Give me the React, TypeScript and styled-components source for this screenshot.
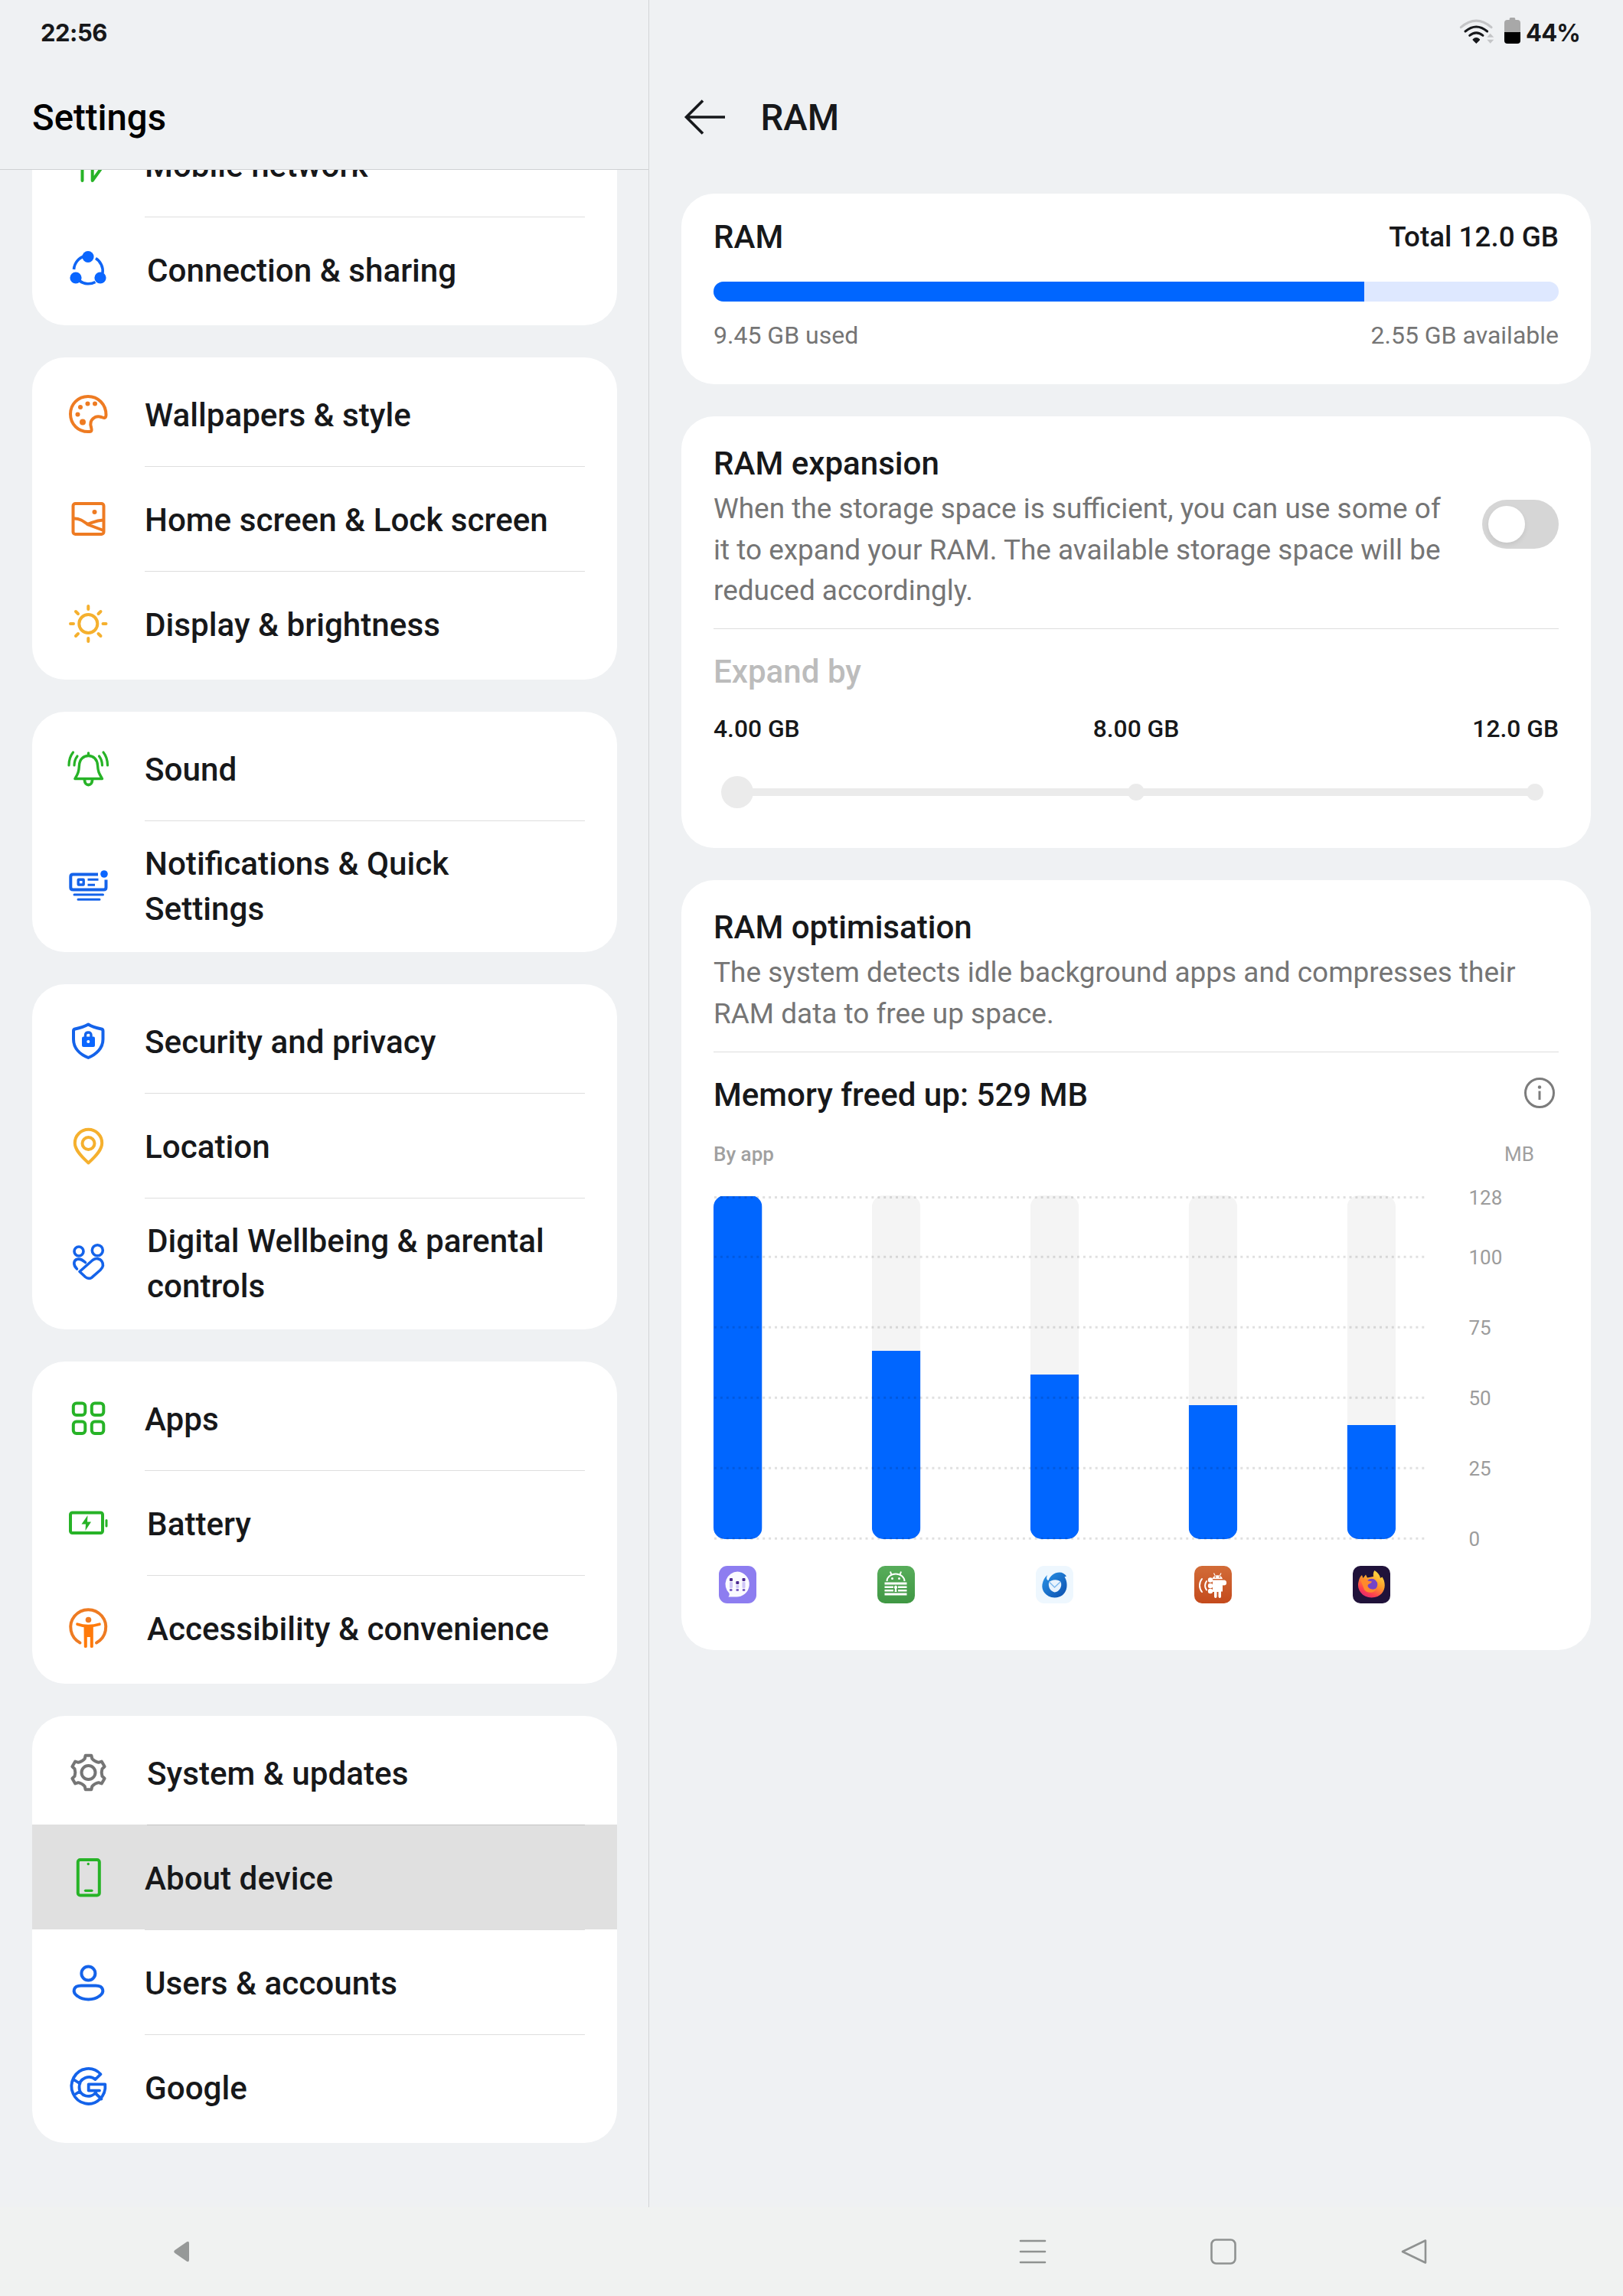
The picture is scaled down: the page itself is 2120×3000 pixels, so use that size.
import type { ReactNode } from 'react'
import styled, { createGlobalStyle } from 'styled-components'

const BLUE = '#1463ea'
const GREEN = '#27b327'
const ORANGE = '#ee7b22'
const YELLOW = '#f5b02e'

type Item = {
  label: string
  icon: ReactNode
  indent?: number
  active?: boolean
}

const stroke = (color: string, width = 4) => ({
  fill: 'none',
  stroke: color,
  strokeWidth: width,
  strokeLinecap: 'round' as const,
  strokeLinejoin: 'round' as const,
})

/* six rounded teeth around the hub */
const gearPath = () => {
  const at = (deg: number, r: number) => {
    const a = (deg * Math.PI) / 180
    return `${(28.5 + r * Math.cos(a)).toFixed(2)} ${(28 + r * Math.sin(a)).toFixed(2)}`
  }
  let d = ''
  for (let k = 0; k < 6; k++) {
    const t = -90 + k * 60
    d += `${k === 0 ? 'M' : 'L'}${at(t - 10, 22.5)} L${at(t + 10, 22.5)} L${at(t + 15, 18.6)} `
    d += `Q${at(t + 30, 16.4)} ${at(t + 45, 18.6)} `
  }
  return d + 'Z'
}

const groups: Item[][] = [
  [
    {
      label: 'Mobile network',
      icon: <path {...stroke(GREEN)} d="M10 20L20.5 6V49M33.7 6V49L46 32" />,
    },
    {
      label: 'Connection & sharing',
      indent: 192,
      icon: (
        <>
          <g fill="#0a66ff">
            <circle cx="28" cy="11.5" r="7.6" />
            <circle cx="12" cy="39" r="7.6" />
            <circle cx="44" cy="39" r="7.6" />
          </g>
          <path {...stroke('#0f65f5', 3.6)} strokeLinecap="butt" d="M24 10.5A19.5 19.5 0 0 0 9.5 28M38 13.5A19.5 19.5 0 0 1 47 33M17 43A19 19 0 0 0 37.5 44.5" />
        </>
      ),
    },
  ],
  [
    {
      label: 'Wallpapers & style',
      icon: (
        <>
          <path {...stroke(ORANGE)} d="M30 51C15 52 5 41 5 28C5 15 15 5 28 5C41 5 51.5 15 51.5 29C51.5 33.5 49 33.5 45.5 32C37 29 29 36 32 45C33 49 33 50.8 30 51Z" />
          <g fill={ORANGE}>
            <circle cx="27.5" cy="14.5" r="3" />
            <circle cx="37" cy="14.5" r="3" />
            <circle cx="18" cy="19" r="3" />
            <circle cx="14.5" cy="28.5" r="3" />
            <circle cx="21" cy="38.5" r="4" />
          </g>
        </>
      ),
    },
    {
      label: 'Home screen & Lock screen',
      icon: (
        <>
          <rect {...stroke(ORANGE)} x="8.5" y="8" width="40" height="40" rx="3" />
          <path {...stroke(ORANGE)} d="M9 27.5C17 27 22 31 28 35.5L48 43M48 29.5C38 30 34 33 27 35" />
          <circle cx="36.5" cy="19" r="3" fill={ORANGE} />
        </>
      ),
    },
    {
      label: 'Display & brightness',
      icon: (
        <>
          <circle {...stroke(YELLOW)} cx="28.3" cy="28" r="12" />
          <path {...stroke(YELLOW)} d="M28.3 5V9M28.3 47V51M5 28H9M47.5 28H51.5M12 12L15 15M41.5 41L44.5 44M44.5 12L41.5 15M15 41L12 44" />
        </>
      ),
    },
  ],
  [
    {
      label: 'Sound',
      icon: (
        <>
          <path {...stroke(GREEN, 3.4)} d="M28.5 8V11M11 41.5H46.5C42 34 41 32 40.5 24C40 16 35 11.5 28.5 11.5C22 11.5 17 16 16.5 24C16 32 15 35 11 41.5Z" />
          <path {...stroke(GREEN, 3.8)} d="M23.5 43.5C24 51.5 33 51.5 33.5 43.5" />
          <path {...stroke(GREEN, 3.2)} d="M8.5 7C4.5 12 3 18 3 24M14 12C11 16 10 20 10 24M48 7C52 12 53.5 18 53.5 24M42.5 12C45.5 16 46.5 20 46.5 24" />
        </>
      ),
    },
    {
      label: 'Notifications & Quick\nSettings',
      icon: (
        <>
          <path {...stroke(BLUE)} strokeLinecap="butt" d="M41 14.5H8.5Q5.3 14.5 5.3 17.5V31.5Q5.3 34.5 8.5 34.5H48.5Q51.5 34.5 51.5 31.5V21.5" />
          <circle cx="49" cy="14" r="4.8" fill="#0a66ff" />
          <rect {...stroke(BLUE, 3.4)} x="15.2" y="21.2" width="7" height="6.8" rx="0.5" />
          <path {...stroke(BLUE, 3)} strokeLinecap="butt" d="M27.5 21.2H41.5M27.5 28.2H37" />
          <path {...stroke(BLUE, 3)} d="M10 41H47.5M15 47.3H43" />
        </>
      ),
    },
  ],
  [
    {
      label: 'Security and privacy',
      icon: (
        <>
          <path {...stroke(BLUE)} d="M28.3 6.5C33 9.5 38 11 45.5 12.5Q47.5 13 47.5 15V26C47.5 38 38 46 28.3 50C18 46 9 38 9 26V15Q9 13 11 12.5C18 11 23 9.5 28.3 6.5Z" />
          <rect x="20" y="22.5" width="17" height="13.5" rx="2" fill="#0a66ff" />
          <path {...stroke(BLUE, 3.4)} d="M24.5 23V20.5Q24.5 17 28.3 17T32 20.5V23" />
          <circle cx="28.3" cy="29" r="2" fill="#fff" />
        </>
      ),
    },
    {
      label: 'Location',
      icon: (
        <>
          <path {...stroke(YELLOW)} d="M28.5 50.5C18 41 10.8 33 10.8 24.5A17.7 17.7 0 0 1 46.2 24.5C46.2 33 39 41 28.5 50.5Z" />
          <circle {...stroke(YELLOW)} cx="28.5" cy="25" r="8" />
        </>
      ),
    },
    {
      label: 'Digital Wellbeing & parental\ncontrols',
      indent: 192,
      icon: (
        <>
          <circle {...stroke(BLUE, 3.6)} cx="16" cy="14" r="6" />
          <circle {...stroke(BLUE, 3.6)} cx="40.3" cy="12.8" r="7" />
          <path {...stroke(BLUE, 3.6)} d="M13.5 37C8 32 9 25.5 14 24.3C18.5 23.5 21 25.5 24.5 28.5" />
          <path {...stroke(BLUE, 3.6)} d="M17 40.5L34 25.5C38 22.5 43 23 46 27C49 31.5 47 35.5 44 38.5L33 48.2Q28.5 51 24.5 47.5Z" />
        </>
      ),
    },
  ],
  [
    {
      label: 'Apps',
      icon: (
        <g {...stroke(GREEN)}>
          <rect x="8.8" y="8.5" width="15.5" height="15.5" rx="4" />
          <rect x="32.8" y="8.5" width="15.5" height="15.5" rx="4" />
          <rect x="8.8" y="32.5" width="15.5" height="15.5" rx="4" />
          <rect x="32.8" y="32.5" width="15.5" height="15.5" rx="4" />
        </g>
      ),
    },
    {
      label: 'Battery',
      indent: 192,
      icon: (
        <>
          <rect {...stroke(GREEN)} x="5" y="14.5" width="42" height="26.5" rx="2.5" />
          <path {...stroke(GREEN, 3)} d="M52 24.5V32" />
          <path fill={GREEN} d="M27.5 18L19.5 29.5H25L24.5 38L32 26.5H27Z" />
        </>
      ),
    },
    {
      label: 'Accessibility & convenience',
      indent: 192,
      icon: (
        <>
          <path {...stroke(ORANGE)} d="M17.5 47.5A23 23 0 1 1 39 47.5" />
          <circle cx="28.5" cy="17.5" r="3.8" fill={ORANGE} />
          <path {...stroke('#ff7a0a', 3.6)} d="M14 23.2Q28 28 43 23.2" />
          <path fill="#ff7a0a" d="M22.5 25.5H34.8V52.5Q34.8 54 32.8 54T30.8 52.5V40H26.8V52.5Q26.8 54 24.8 54T22.8 52.5Z" />
        </>
      ),
    },
  ],
  [
    {
      label: 'System & updates',
      indent: 192,
      icon: (
        <>
          <path {...stroke('#757575')} d={gearPath()} />
          <circle {...stroke('#757575')} cx="28.5" cy="28" r="9" />
        </>
      ),
    },
    {
      label: 'About device',
      active: true,
      icon: (
        <>
          <rect {...stroke(GREEN)} x="14.8" y="5" width="28" height="46.5" rx="3" />
          <circle cx="28.3" cy="10.5" r="1.7" fill={GREEN} />
          <path {...stroke(GREEN, 3.2)} d="M24.5 45.3H33" />
        </>
      ),
    },
    {
      label: 'Users & accounts',
      icon: (
        <>
          <circle {...stroke(BLUE)} cx="28.4" cy="16.5" r="9" />
          <path {...stroke(BLUE)} d="M19 32.5H38C48.5 32.5 50 41 43 46C35 52 22 52 14 46C7 41 8.5 32.5 19 32.5Z" />
        </>
      ),
    },
    {
      label: 'Google',
      icon: (
        <path
          {...stroke(BLUE, 3.8)}
          d="M37.5 18L44.5 11.2A22 23 0 1 0 50.3 24.3H28.7V32.6H43M38.5 34.5C32 43.5 16.500 41 16.5 28C16.5 16 30 11.5 37.5 18M9 18L17.5 23.5M9.5 38.5L17.5 33.5M38.5 37L45.5 43.5"
        />
      ),
    },
  ],
]

const CHART_TOP = 12
const CHART_BOTTOM = 461
const BAR_STEP = 206.9
const gridLines = [
  { label: '128', y: 14.5 },
  { label: '100', y: 92.3 },
  { label: '75', y: 184.3 },
  { label: '50', y: 276.3 },
  { label: '25', y: 368.3 },
  { label: '0', y: 460.3 },
]
const bars = [448, 246, 215, 175, 149]

function MessagesIcon() {
  return (
    <svg width="49" height="49" viewBox="0 0 49 49">
      <rect width="49" height="49" rx="11" fill="#8d7df0" />
      <path fill="#fbfaff" d="M24.5 7.5A16.5 16.5 0 1 1 22 40.5H12.5Q14.5 38 13.5 35.8A16.5 16.5 0 0 1 24.5 7.5Z" />
      <g fill="#4d2a92">
        <rect x="14" y="16" width="4" height="4" rx="1" />
        <rect x="30.5" y="16" width="4" height="4" rx="1" />
        <rect x="22.3" y="20" width="4" height="4" rx="1" />
      </g>
      <g fill="#7c62c4">
        <rect x="14" y="30" width="3.5" height="3" rx="1" />
        <rect x="22.5" y="30" width="3.5" height="3" rx="1" />
        <rect x="30.8" y="30" width="3.5" height="3" rx="1" />
      </g>
      <g fill="#cfc6f8">
        <rect x="14" y="21" width="4" height="8" rx="1" />
        <rect x="22.3" y="25" width="4" height="4" rx="1" />
        <rect x="30.5" y="21" width="4" height="8" rx="1" />
      </g>
    </svg>
  )
}

function KeyPassIcon() {
  return (
    <svg width="49" height="49" viewBox="0 0 49 49">
      <defs>
        <linearGradient id="kp" x1="0" y1="0" x2="0" y2="1">
          <stop offset="0" stopColor="#58ad5b" />
          <stop offset="1" stopColor="#3f9743" />
        </linearGradient>
      </defs>
      <rect width="49" height="49" rx="10" fill="url(#kp)" />
      <path fill="none" stroke="#fff" strokeWidth="2" d="M12.5 20A11.5 9.5 0 0 1 35.5 20M17 7.5L18.5 12M31 7.5L29.5 12" />
      <circle cx="19.5" cy="16.5" r="1.5" fill="#fff" />
      <circle cx="28.5" cy="16.5" r="1.5" fill="#fff" />
      <path fill="#fff" d="M9.5 21.5H38.5V24.5H9.5ZM9.5 26.5H21V29H9.5ZM27 26.5H38.5V29H27ZM9.5 31H21V33.5H9.5ZM27 31H38.5V33.5H27ZM9.5 35.5H38.5V38.5H9.5ZM24 25.5A2.5 2.5 0 0 1 25 30L25.5 34H22.5L23 30A2.5 2.5 0 0 1 24 25.5Z" />
    </svg>
  )
}

function ThunderbirdIcon() {
  return (
    <svg width="49" height="49" viewBox="0 0 49 49">
      <defs>
        <linearGradient id="tb" x1="0" y1="0" x2="1" y2="1">
          <stop offset="0" stopColor="#2b95e8" />
          <stop offset="1" stopColor="#0c4fae" />
        </linearGradient>
      </defs>
      <rect width="49" height="49" rx="11" fill="#eef7fe" />
      <path fill="url(#tb)" d="M15 12C13 17 15 19 16.5 19C19 13 24 8.5 31 8.5C35 8.5 38 10.5 40 13.5L37.5 14.5C43 22 42.5 41 24.5 41.5C13 41 7 32 8.5 24C9.5 19 11.5 15 15 12Z" />
      <path fill="#e9f3fd" d="M17 22C20 17.5 29 17 32.5 21C35 26 31 34 24.5 34.5C19 33 16 28 17 22Z" />
      <path fill="none" stroke="#7fb9ee" strokeWidth="1.5" d="M18 21.5L24.5 28L32 21" />
    </svg>
  )
}

function DroidSoundIcon() {
  return (
    <svg width="49" height="49" viewBox="0 0 49 49">
      <defs>
        <linearGradient id="ds" x1="0" y1="0" x2="0" y2="1">
          <stop offset="0" stopColor="#d26c38" />
          <stop offset="1" stopColor="#c44a1c" />
        </linearGradient>
      </defs>
      <rect width="49" height="49" rx="10" fill="url(#ds)" />
      <path fill="none" stroke="#fff" strokeWidth="2" strokeLinecap="round" d="M10 17C6 22 6 29 10 34M16 20C13.5 24 13.5 28 16 31.5" />
      <g fill="#fff">
        <path d="M23.5 17A7 6.5 0 0 1 37 17ZM24 18.5H37V33.5H35V40Q35 42 33.3 42T31.5 40V34H29.5V40Q29.5 42 27.8 42T26 40V34H24Z" />
        <circle cx="21" cy="18.5" r="3.2" />
        <circle cx="21" cy="26" r="3.2" />
        <circle cx="21" cy="33" r="3.2" />
        <circle cx="38.5" cy="22" r="3.6" />
      </g>
      <path stroke="#fff" strokeWidth="1.2" d="M25.5 9.5L27 12.5M35 9.5L33.5 12.5" />
      <circle cx="27.5" cy="14.5" r="0.9" fill="#cf6531" />
      <circle cx="33" cy="14.5" r="0.9" fill="#cf6531" />
    </svg>
  )
}

function FirefoxIcon() {
  return (
    <svg width="49" height="49" viewBox="0 0 49 49">
      <defs>
        <linearGradient id="ff" x1="0.85" y1="0.05" x2="0.3" y2="1">
          <stop offset="0" stopColor="#ffe046" />
          <stop offset="0.45" stopColor="#ff9a2a" />
          <stop offset="0.8" stopColor="#ff4050" />
          <stop offset="1" stopColor="#e0286e" />
        </linearGradient>
      </defs>
      <rect width="49" height="49" rx="10" fill="#20123a" />
      <path fill="url(#ff)" d="M28.5 6C33 9 35.5 12 36 16L38.5 14.5C45 24 42.5 41 24.5 41.5C11 41 5 30 7.5 21C8.3 17 9.5 14 12 12L13.5 16L17 11.5L19 15.5L27 14C26.5 11 27 8 28.5 6Z" />
      <circle cx="24.5" cy="24.5" r="7.8" fill="#7443c8" />
      <path fill="#ff8a2c" d="M10 18C14 16 18 17 20 19.5L25 20.5C24 23.5 20 23 19.5 26C20 30 27 32.5 31 29C30 35 20 37.5 15 31Z" />
    </svg>
  )
}

function SettingsRow({ item }: { item: Item }) {
  return (
    <Row $active={item.active}>
      <RowIcon viewBox="0 0 56 56">{item.icon}</RowIcon>
      <RowLabel $indent={item.indent}>{item.label}</RowLabel>
    </Row>
  )
}

function Sidebar() {
  return (
    <SidebarColumn>
      <SidebarHeader>
        <Clock>22:56</Clock>
        <Title>Settings</Title>
      </SidebarHeader>
      <SidebarList>
        {groups.map((items, g) => (
          <Group key={g}>
            {items.map((item, i) => (
              <div key={item.label}>
                {i > 0 && <RowDivider $indent={items[i - 1].indent} />}
                <SettingsRow item={item} />
              </div>
            ))}
          </Group>
        ))}
      </SidebarList>
    </SidebarColumn>
  )
}

function StatusIcons() {
  return (
    <StatusBar>
      <svg width="47" height="36" viewBox="80 37 141 108">
        <g fill="none" strokeLinecap="round" strokeWidth="9">
          <path stroke="#c4c5c7" d="M87 78Q147 27 206 78" />
          <path stroke="#16181b" d="M104 94Q147 58 190 94" />
          <path stroke="#16181b" d="M121 110Q147 89 173 110" />
        </g>
        <path fill="#16181b" d="M133 125Q147 111 161 125Q162 127 160 129L147 142L134 129Q132 127 133 125Z" />
        <path fill="#c4c5c7" d="M202 102L216 117H189ZM189 126H216L202 141Z" />
      </svg>
      <svg width="21" height="34" viewBox="258 39 63 102">
        <rect x="278" y="39" width="23" height="14" rx="5" fill="#a8a8a8" />
        <path fill="#a8a8a8" d="M258 96V60Q258 48 270 48H309Q321 48 321 60V96Z" />
        <path fill="#000" d="M258 96H321V129Q321 141 309 141H270Q258 141 258 129Z" />
      </svg>
      <BatteryText>44%</BatteryText>
    </StatusBar>
  )
}

function UsageCard() {
  return (
    <UsagePanel>
      <SpaceBetween>
        <CardTitle>RAM</CardTitle>
        <Total>Total 12.0 GB</Total>
      </SpaceBetween>
      <UsageTrack>
        <UsageFill />
      </UsageTrack>
      <Caption>
        <span>9.45 GB used</span>
        <span>2.55 GB available</span>
      </Caption>
    </UsagePanel>
  )
}

function ExpansionCard() {
  return (
    <ExpansionPanel>
      <SwitchRow>
        <div>
          <CardHeading>RAM expansion</CardHeading>
          <Description>
            When the storage space is sufficient, you can use some of it to expand your RAM. The
            available storage space will be reduced accordingly.
          </Description>
        </div>
        <Switch role="switch" aria-checked="false">
          <SwitchKnob />
        </Switch>
      </SwitchRow>
      <Divider />
      <ExpandBy>Expand by</ExpandBy>
      <Sizes>
        <span>4.00 GB</span>
        <span>8.00 GB</span>
        <span>12.0 GB</span>
      </Sizes>
      <Slider>
        <Knob $size={42} />
        <Track />
        <Knob $size={22} />
        <Track $last />
        <Knob $size={22} />
      </Slider>
    </ExpansionPanel>
  )
}

function OptimisationCard() {
  return (
    <OptimisationPanel>
      <CardHeading>RAM optimisation</CardHeading>
      <Description>
        The system detects idle background apps and compresses their RAM data to free up space.
      </Description>
      <Divider />
      <FreedRow>
        <CardTitle>Memory freed up: 529 MB</CardTitle>
        <svg width="42" height="42" viewBox="0 0 42 42">
          <circle cx="21" cy="21" r="18.5" fill="none" stroke="#7c7c7c" strokeWidth="3" />
          <circle cx="21" cy="13.5" r="2.2" fill="#7c7c7c" />
          <path stroke="#7c7c7c" strokeWidth="3" d="M21 18.5V30" />
        </svg>
      </FreedRow>
      <Units>
        <b>By app</b>
        <span>MB</span>
      </Units>
      <Chart viewBox="0 0 1104 476">
        <defs>
          <clipPath id="bars">
            {bars.map((_, i) => (
              <rect key={i} x={i * BAR_STEP} y={CHART_TOP} width="63.5" height={CHART_BOTTOM - CHART_TOP} rx="15" />
            ))}
          </clipPath>
        </defs>
        <g clipPath="url(#bars)">
          {bars.map((height, i) => (
            <g key={i}>
              <rect x={i * BAR_STEP} y={CHART_TOP} width="63.5" height={CHART_BOTTOM - CHART_TOP} fill="#f4f4f4" />
              <rect x={i * BAR_STEP} y={CHART_BOTTOM - height} width="63.5" height={height} fill="#0066ff" />
            </g>
          ))}
        </g>
        {gridLines.map(({ label, y }) => (
          <g key={label}>
            <line x1="1" x2="933" y1={y} y2={y} stroke="#000" strokeOpacity="0.12" strokeWidth="3" strokeDasharray="3 4.9" />
            <AxisLabel x="986.5" y={y + 9.5}>{label}</AxisLabel>
          </g>
        ))}
      </Chart>
      <AppIcons>
        <MessagesIcon />
        <KeyPassIcon />
        <ThunderbirdIcon />
        <DroidSoundIcon />
        <FirefoxIcon />
      </AppIcons>
    </OptimisationPanel>
  )
}

function NavigationBar() {
  return (
    <NavBar>
      <NavSide>
        <svg width="22" height="28" viewBox="0 0 22 28">
          <path fill="#969998" d="M1.500 12L17 1.2Q20 0 20 3V25Q20 28 17 26.8L1.5 16Q-1 14 1.5 12Z" />
        </svg>
      </NavSide>
      <NavButtons>
        <svg width="36" height="36" viewBox="0 0 36 36" {...stroke('#8f9291', 2.6)}>
          <path d="M2 4H34M2 18H34M2 32H34" />
        </svg>
        <svg width="36" height="36" viewBox="0 0 36 36" {...stroke('#8f9291', 2.6)}>
          <rect x="2.5" y="2.5" width="31" height="31" rx="6" />
        </svg>
        <svg width="36" height="36" viewBox="0 0 36 36" {...stroke('#8f9291', 2.6)}>
          <path d="M3 18L33 3.5V32.5Z" />
        </svg>
      </NavButtons>
    </NavBar>
  )
}

function App() {
  return (
    <Screen>
      <GlobalStyle />
      <Panes>
        <Sidebar />
        <Content>
          <StatusIcons />
          <ContentHeader>
            <svg width="56" height="48" viewBox="0 0 56 48">
              <path fill="none" stroke="#16181b" strokeWidth="3.6" d="M54 24H3M25 2.5L3.5 24L25 45.5" />
            </svg>
            <Title>RAM</Title>
          </ContentHeader>
          <Cards>
            <UsageCard />
            <ExpansionCard />
            <OptimisationCard />
          </Cards>
        </Content>
      </Panes>
      <NavigationBar />
    </Screen>
  )
}

export default App

const GlobalStyle = createGlobalStyle`
  * {
    box-sizing: border-box;
  }

  body {
    margin: 0;
    background: #eff1f3;
    color: #17181a;
    font-family: Roboto, 'Liberation Sans', sans-serif;
  }

  svg {
    display: block;
    flex-shrink: 0;
  }
`

const Screen = styled.div`
  display: flex;
  flex-direction: column;
  width: 2120px;
  height: 3000px;
`

const Panes = styled.div`
  display: flex;
  height: 2884px;
`

const SidebarColumn = styled.aside`
  display: flex;
  flex-direction: column;
  width: 848px;
  border-right: 1px solid #d3d5d7;
`

const SidebarHeader = styled.header`
  height: 222px;
  flex-shrink: 0;
  border-bottom: 1px solid #cfd1d3;
  padding: 23px 42px 0;

  & h1 {
    margin-top: 59px;
    color: #000;
  }
`

const Clock = styled.div`
  font: 650 31px/40px Inter, sans-serif;
  letter-spacing: -0.5px;
  padding-left: 11px;
`

const Title = styled.h1`
  margin: 0;
  font-size: 47.3px;
  font-weight: 500;
  line-height: 64px;
`

const SidebarList = styled.div`
  display: flex;
  flex-direction: column;
  flex: 1;
  gap: 42px;
  padding: 0 41px 0 42px;
  overflow: hidden;

  /* the list is scrolled, its first card slides under the header */
  & > :first-child {
    margin-top: -81px;
  }
`

const Group = styled.div`
  flex-shrink: 0;
  padding: 5px 0;
  border-radius: 43px;
  background: #fff;
`

const Row = styled.div<{ $active?: boolean }>`
  display: flex;
  align-items: center;
  min-height: 137px;
  padding: 22px 0 22px 45px;
  background: ${({ $active }) => ($active ? '#e0e0e0' : 'transparent')};
`

const RowIcon = styled.svg`
  width: 56px;
  height: 56px;
`

const RowLabel = styled.span<{ $indent?: number }>`
  margin-left: ${({ $indent = 189 }) => $indent - 143}px;
  padding-top: 6px;
  font-size: 42.2px;
  font-weight: 500;
  line-height: 58.5px;
  white-space: pre-line;
`

const RowDivider = styled.div<{ $indent?: number }>`
  position: relative;
  height: 1px;
  margin: 0 42px -1px ${({ $indent = 189 }) => $indent - 42}px;
  background: rgba(0, 0, 0, 0.13);
`

const Content = styled.main`
  flex: 1;
`

const StatusBar = styled.div`
  display: flex;
  align-items: center;
  justify-content: flex-end;
  height: 80px;
  padding: 0 56px 0 0;

  & svg + svg {
    margin: 0 7px 0 12px;
  }
`

const BatteryText = styled.span`
  font: 650 31px/40px Inter, sans-serif;
  letter-spacing: -0.8px;
  padding-top: 5px;
`

const ContentHeader = styled.div`
  display: flex;
  align-items: center;
  gap: 44.5px;
  height: 146px;
  padding: 0 0 0 45px;

  & h1 {
    padding-top: 2px;
  }
`

const Cards = styled.div`
  display: flex;
  flex-direction: column;
  gap: 42px;
  margin: 27px 42px 0;
`

const Panel = styled.section`
  padding: 32px 42px 0;
  border-radius: 43px;
  background: #fff;
`

const UsagePanel = styled(Panel)`
  height: 249px;
`

const ExpansionPanel = styled(Panel)`
  height: 564px;
`

const OptimisationPanel = styled(Panel)`
  height: 1006px;
`

const SpaceBetween = styled.div`
  display: flex;
  align-items: center;
  justify-content: space-between;
`

const CardTitle = styled.h2`
  margin: 0;
  font-size: 42.1px;
  font-weight: 500;
  line-height: 50px;
`

const CardHeading = styled(CardTitle)`
  line-height: 60px;
`

const Total = styled.span`
  padding-bottom: 1px;
  font-size: 36.8px;
  font-weight: 500;
`

const UsageTrack = styled.div`
  height: 26px;
  margin-top: 33px;
  border-radius: 13px;
  background: #dee8ff;
  overflow: hidden;
`

const UsageFill = styled.div`
  width: 77%;
  height: 100%;
  background: #0066ff;
`

const Caption = styled(SpaceBetween)`
  margin-top: 24px;
  color: #757575;
  font-size: 32px;
  line-height: 40px;
`

const SwitchRow = styled(SpaceBetween)`
  gap: 36px;
`

const Description = styled.p`
  margin: 2px 0 0;
  color: #757575;
  font-size: 36.95px;
  line-height: 53.5px;
`

const Switch = styled.div`
  flex-shrink: 0;
  width: 100px;
  height: 64px;
  margin-bottom: 5px;
  padding: 8px;
  border-radius: 32px;
  background: #d6d6d6;
`

const SwitchKnob = styled.div`
  width: 48px;
  height: 48px;
  border-radius: 50%;
  background: #fff;
  box-shadow: 0 3px 6px rgba(0, 0, 0, 0.08);
`

const Divider = styled.hr`
  height: 1px;
  margin: 22.5px 0 0;
  border: 0;
  background: #dedede;
`

const ExpandBy = styled(CardTitle)`
  margin-top: 31px;
  color: #bcbcbc;
`

const Sizes = styled(SpaceBetween)`
  margin-top: 29px;
  font-size: 31.8px;
  font-weight: 500;
  line-height: 40px;
`

const Slider = styled.div`
  display: flex;
  align-items: center;
  margin-top: 42px;
  padding: 0 20px 0 10px;
`

const Knob = styled.div<{ $size: number }>`
  flex-shrink: 0;
  width: ${({ $size }) => $size}px;
  height: ${({ $size }) => $size}px;
  border-radius: 50%;
  background: #ebebeb;
`

const Track = styled.div<{ $last?: boolean }>`
  flex: 1 1 ${({ $last }) => ($last ? 10 : 0)}px;
  height: 10px;
  margin: 0 -2px;
  background: #ebebeb;
`

const FreedRow = styled(SpaceBetween)`
  margin-top: 31px;
  padding-right: 4px;

  & svg {
    margin-bottom: 6px;
  }
`

const Units = styled(SpaceBetween)`
  margin-top: 36px;
  padding-right: 32px;
  color: #a0a0a0;
  font-size: 26px;
  line-height: 32px;

  & b {
    font-weight: 500;
  }
`

const Chart = styled.svg`
  width: 1104px;
  height: 476px;
  margin-top: 26px;
`

const AxisLabel = styled.text`
  fill: #9c9c9c;
  font-size: 26px;
`

const AppIcons = styled.div`
  display: flex;
  gap: 157.9px;
  margin-top: 20px;
  padding-left: 7px;
`

const NavBar = styled.nav`
  display: flex;
  align-items: center;
  height: 116px;
  background: #f0f2f1;
`

const NavSide = styled.div`
  width: 848px;
  padding-left: 227px;
`

const NavButtons = styled.div`
  display: flex;
  gap: 213px;
  padding-left: 483px;
`
